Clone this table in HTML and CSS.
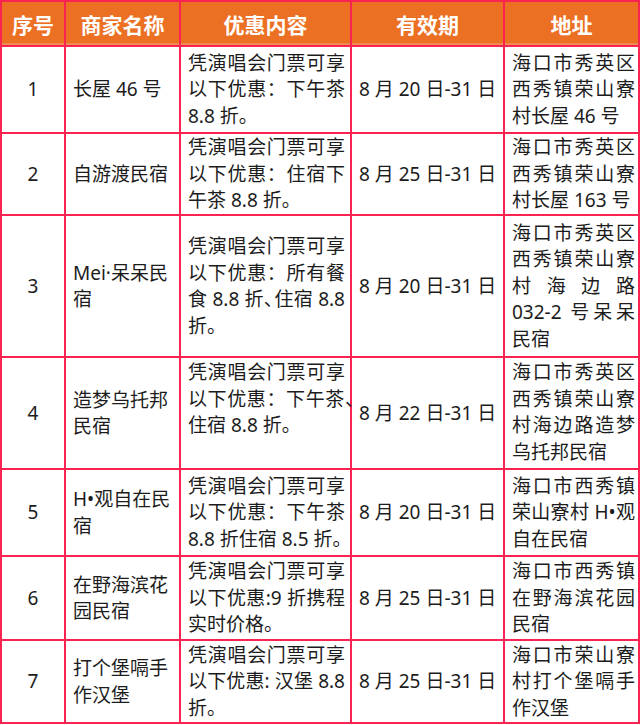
FILE: index.html
```html
<!DOCTYPE html>
<html lang="zh-CN">
<head>
<meta charset="utf-8">
<title>商家优惠</title>
<link rel="stylesheet" href="styles.css">
</head>
<body>
<table class="deals">
  <colgroup>
    <col class="c-no">
    <col class="c-name">
    <col class="c-offer">
    <col class="c-date">
    <col class="c-addr">
  </colgroup>
  <thead>
    <tr class="head">
      <th>序号</th>
      <th>商家名称</th>
      <th>优惠内容</th>
      <th>有效期</th>
      <th>地址</th>
    </tr>
  </thead>
  <tbody>
    <tr class="r1">
      <td class="no">1</td>
      <td class="name">长屋 46 号</td>
      <td class="offer">凭演唱会门票可享以下优惠：下午茶 8.8 折。</td>
      <td class="date">8 月 20 日-31 日</td>
      <td class="addr">海口市秀英区西秀镇荣山寮村长屋 46 号</td>
    </tr>
    <tr class="r2">
      <td class="no">2</td>
      <td class="name">自游渡民宿</td>
      <td class="offer">凭演唱会门票可享以下优惠：住宿下午茶 8.8 折。</td>
      <td class="date">8 月 25 日-31 日</td>
      <td class="addr">海口市秀英区西秀镇荣山寮村长屋 163 号</td>
    </tr>
    <tr class="r3">
      <td class="no">3</td>
      <td class="name">Mei·呆呆民宿</td>
      <td class="offer">凭演唱会门票可享以下优惠：所有餐食 8.8 折<span class="squeeze">、</span>住宿 8.8 折。</td>
      <td class="date">8 月 20 日-31 日</td>
      <td class="addr">海口市秀英区西秀镇荣山寮村海边路 <span class="nobr">032-2</span> 号呆呆民宿</td>
    </tr>
    <tr class="r4">
      <td class="no">4</td>
      <td class="name">造梦乌托邦民宿</td>
      <td class="offer top">凭演唱会门票可享以下优惠：下午茶<span class="hang">、</span>住宿 8.8 折。</td>
      <td class="date">8 月 22 日-31 日</td>
      <td class="addr top">海口市秀英区西秀镇荣山寮村海边路造梦乌托邦民宿</td>
    </tr>
    <tr class="r5">
      <td class="no">5</td>
      <td class="name">H•观自在民宿</td>
      <td class="offer">凭演唱会门票可享以下优惠：下午茶 8.8 折住宿 8.5 折<span class="hang">。</span></td>
      <td class="date">8 月 20 日-31 日</td>
      <td class="addr">海口市西秀镇荣山寮村 H•观自在民宿</td>
    </tr>
    <tr class="r6">
      <td class="no">6</td>
      <td class="name">在野海滨花园民宿</td>
      <td class="offer">凭演唱会门票可享以下优惠:9 折携程实时价格。</td>
      <td class="date">8 月 25 日-31 日</td>
      <td class="addr">海口市西秀镇在野海滨花园民宿</td>
    </tr>
    <tr class="r7">
      <td class="no">7</td>
      <td class="name">打个堡嗝手作汉堡</td>
      <td class="offer">凭演唱会门票可享以下优惠: 汉堡 8.8 折。</td>
      <td class="date">8 月 25 日-31 日</td>
      <td class="addr">海口市荣山寮村打个堡嗝手作汉堡</td>
    </tr>
  </tbody>
</table>
</body>
</html>
```

FILE: styles.css
```css
html, body {
  margin: 0;
  padding: 0;
  background: #ffffff;
}

body {
  font-family: "Noto Sans", "Noto Sans CJK SC", sans-serif;
  color: #1c1c1c;
}

.deals {
  width: 640px;
  border-collapse: collapse;
  table-layout: fixed;
}

.c-no { width: 64px; }
.c-name { width: 115px; }
.c-offer { width: 171px; }
.c-date { width: 153px; }
.c-addr { width: 135px; }

.deals th,
.deals td {
  border: 2px solid #fb2352;
  padding: 0 7px;
  font-size: 19px;
  line-height: 26.5px;
  vertical-align: middle;
}

.deals th {
  background: #ec7023;
  color: #ffffff;
  font-family: "Noto Sans CJK SC", sans-serif;
  font-size: 21px;
  font-weight: 700;
  text-align: center;
  line-height: 26px;
  padding: 0;
  box-shadow: inset 0 -2px 0 #f28a50;
}

.head { height: 45px; }
.r1 { height: 87px; }
.r2 { height: 82px; }
.r3 { height: 142px; }
.r4 { height: 112px; }
.r5 { height: 87px; }
.r6 { height: 84px; }
.r7 { height: 83px; }

.no {
  text-align: center;
}

.name {
  text-align: left;
}

.deals td.offer {
  text-align: justify;
  padding-right: 5px;
}

.deals td.addr {
  text-align: justify;
  padding-right: 3px;
}

.date {
  text-align: center;
  white-space: nowrap;
}

.deals td.top {
  vertical-align: top;
  padding-top: 1px;
}

.nobr {
  white-space: nowrap;
}

.squeeze {
  letter-spacing: -0.45em;
}

.hang {
  letter-spacing: -1em;
}
```
